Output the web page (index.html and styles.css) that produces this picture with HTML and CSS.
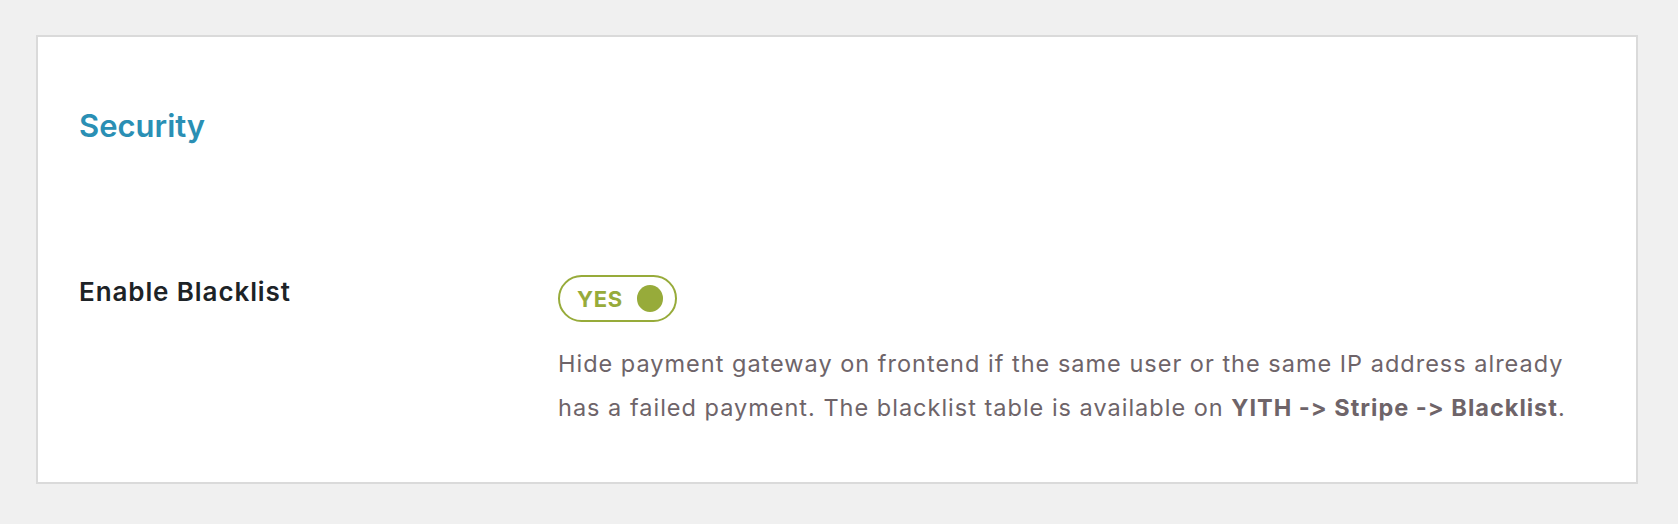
FILE: index.html
```html
<!DOCTYPE html>
<html lang="en">
<head>
<meta charset="utf-8">
<title>Security</title>
<link rel="stylesheet" href="styles.css">
</head>
<body>
<div class="page">
  <section class="card">
    <h2 class="card-title">Security</h2>
    <div class="row">
      <div class="row-label">Enable Blacklist</div>
      <div class="row-field">
        <div class="toggle">
          <span class="toggle-text">YES</span>
          <span class="toggle-knob"></span>
        </div>
        <p class="description">Hide payment gateway on frontend if the same user or the same IP address already has a failed payment. The blacklist table is available on <strong>YITH -&gt; Stripe -&gt; Blacklist</strong>.</p>
      </div>
    </div>
  </section>
</div>
</body>
</html>
```

FILE: styles.css
```css
html, body {
  margin: 0;
  padding: 0;
  background: #f0f0f0;
  font-family: Inter, "Noto Sans", sans-serif;
  font-feature-settings: "calt" 0, "liga" 0;
}

.page {
  padding: 35px 0 0 36px;
}

.card {
  box-sizing: border-box;
  width: 1602px;
  background: #ffffff;
  border: 2px solid #dadada;
  padding: 69px 40px 52px 41px;
}

.card-title {
  margin: 0;
  font-size: 31px;
  line-height: 40px;
  font-weight: 600;
  color: #2a8fb4;
}

.row {
  display: grid;
  grid-template-columns: 479px 1fr;
  margin-top: 129px;
}

.row-label {
  margin-top: 2px;
  font-size: 26px;
  line-height: 30px;
  font-weight: 600;
  letter-spacing: 0.9px;
  color: #1d2327;
}

.toggle {
  box-sizing: border-box;
  display: inline-flex;
  align-items: center;
  gap: 14px;
  height: 47px;
  width: 119px;
  padding: 0 12px 0 17px;
  border: 2px solid #97ab3a;
  border-radius: 24px;
}

.toggle-text {
  font-size: 22px;
  font-weight: 700;
  letter-spacing: 0.6px;
  color: #97ab3a;
  line-height: 1;
}

.toggle-knob {
  width: 27px;
  height: 27px;
  border-radius: 50%;
  background: #97ab3a;
}

.description {
  margin: 20px 0 0;
  font-size: 23.5px;
  line-height: 44px;
  letter-spacing: 1px;
  color: #6e6469;
  max-width: 1040px;
}

.description strong {
  font-weight: 700;
}
```
